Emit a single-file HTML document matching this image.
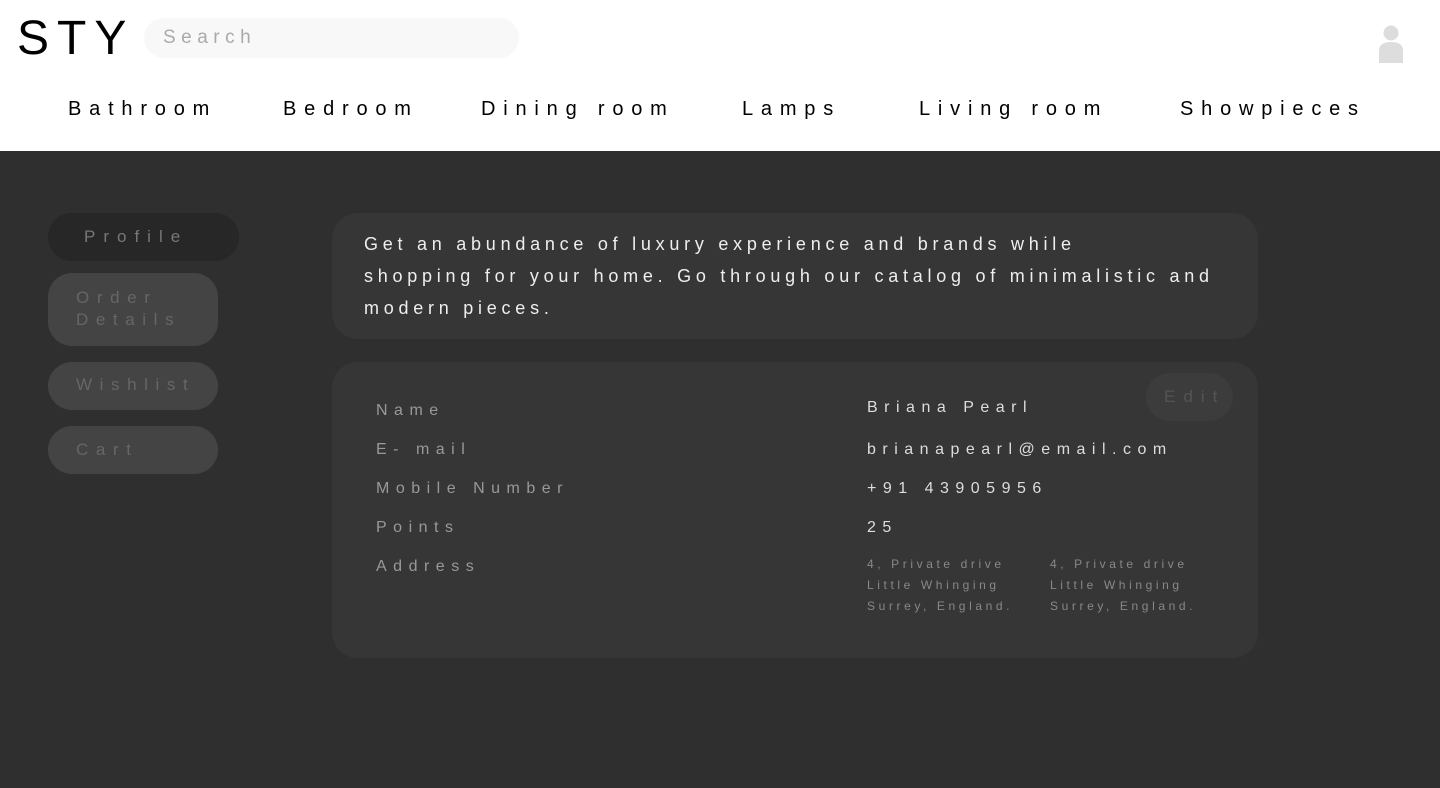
<!DOCTYPE html>
<html><head><style>
*{margin:0;padding:0;box-sizing:border-box}
body{width:1440px;height:788px;background:#2f2f2f;font-family:"Liberation Sans",sans-serif;position:relative;overflow:hidden}
.hdr{position:absolute;left:0;top:0;width:1440px;height:151px;background:#fff}
.a{position:absolute;white-space:nowrap}
.logo{left:17px;top:14px;font-size:48px;letter-spacing:8px;color:#000;line-height:50px}
.search{left:144px;top:18px;width:375px;height:40px;border-radius:20px;background:#f8f8f8;color:#aaa;font-size:19px;letter-spacing:5.5px;padding:9px 0 0 19px}
.nav{top:98px;font-size:20px;letter-spacing:7.8px;color:#000}
.btn{position:absolute;left:48px;width:170px;border-radius:24px;background:#444;color:#666;font-size:17px;letter-spacing:7.6px;padding-left:28px}
.card{position:absolute;left:332px;width:926px;background:#363636;border-radius:26px}
.lab{left:376px;font-size:16px;letter-spacing:6.5px;color:#999}
.val{left:867px;font-size:16px;letter-spacing:6.5px;color:#ddd}
.addr{font-size:12px;letter-spacing:3.6px;color:#888;line-height:21px}
</style></head><body>
<div class="hdr"></div>
<div class="a logo">STY</div>
<div class="a search">Search</div>
<svg class="a" style="left:1376px;top:23px" width="30" height="40"><circle cx="15" cy="10" r="7.5" fill="#ddd"/><path d="M3 40 V28 Q3 19 15 19 Q27 19 27 28 V40 Z" fill="#ddd"/></svg>
<div class="a nav" style="left:68px">Bathroom</div>
<div class="a nav" style="left:283px">Bedroom</div>
<div class="a nav" style="left:481px">Dining room</div>
<div class="a nav" style="left:742px">Lamps</div>
<div class="a nav" style="left:919px">Living room</div>
<div class="a nav" style="left:1180px">Showpieces</div>

<div class="btn" style="top:213px;height:48px;width:191px;background:#272727;padding-left:36px;padding-top:14px;color:#777;letter-spacing:8px">Profile</div>
<div class="btn" style="top:273px;height:73px;padding-top:14px;line-height:22px">Order<br>Details</div>
<div class="btn" style="top:362px;height:48px;padding-top:13px">Wishlist</div>
<div class="btn" style="top:426px;height:48px;padding-top:14px">Cart</div>

<div class="card" style="top:213px;height:126px"></div>
<div class="a" style="left:364px;top:228px;font-size:18px;letter-spacing:4.75px;color:#eee;line-height:32px">Get an abundance of luxury experience and brands while<br>shopping for your home. Go through our catalog of minimalistic and<br>modern pieces.</div>

<div class="card" style="top:362px;height:296px"></div>
<div class="a" style="left:1146px;top:373px;width:87px;height:48px;border-radius:24px;background:#3c3c3c;color:#555;font-size:17px;letter-spacing:8px;padding:14px 0 0 18px">Edit</div>
<div class="a lab" style="top:402px">Name</div>
<div class="a lab" style="top:441px">E- mail</div>
<div class="a lab" style="top:480px">Mobile Number</div>
<div class="a lab" style="top:519px">Points</div>
<div class="a lab" style="top:558px">Address</div>
<div class="a val" style="top:399px">Briana Pearl</div>
<div class="a val" style="top:441px">brianapearl@email.com</div>
<div class="a val" style="top:480px">+91 43905956</div>
<div class="a val" style="top:519px">25</div>
<div class="a addr" style="left:867px;top:554px">4, Private drive<br>Little Whinging<br>Surrey, England.</div>
<div class="a addr" style="left:1050px;top:554px">4, Private drive<br>Little Whinging<br>Surrey, England.</div>
</body></html>
